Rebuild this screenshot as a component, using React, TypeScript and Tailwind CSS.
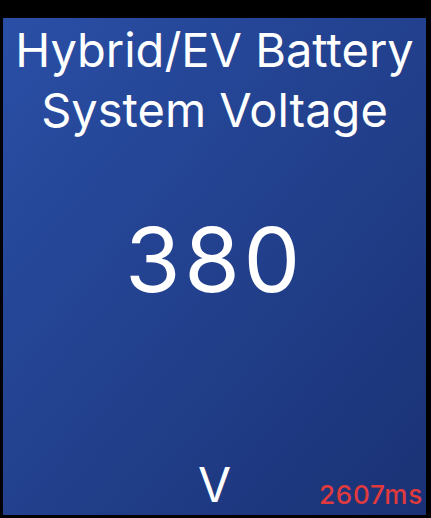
export default function App() {
  return (
    <div className="h-[518px] w-full bg-black pt-[18px] pb-[3px] pl-[3px] pr-[5px] font-['Inter',sans-serif]">
      <div className="relative flex h-full flex-col items-center bg-gradient-to-br from-[#2a4fa6] to-[#1a3275] text-white">
        <h1 className="pt-[2px] text-center text-[47px] leading-[60px] font-normal">
          Hybrid/EV Battery
          <br />
          System Voltage
        </h1>
        <div className="mt-[75px] text-[90px] leading-[90px] tracking-[0.04em]">380</div>
        <div className="mt-[150px] text-[48px] leading-[60px]">V</div>
        <div className="absolute right-[3px] bottom-[7px] text-[26px] leading-[26px] font-medium tracking-[0.03em] text-[#e13a3d]">
          2607ms
        </div>
      </div>
    </div>
  );
}
